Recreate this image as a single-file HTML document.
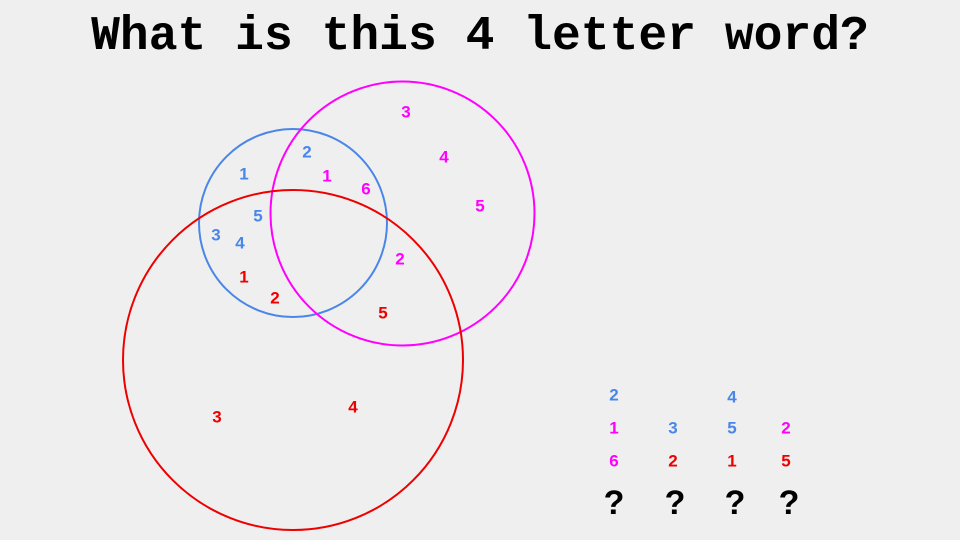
<!DOCTYPE html>
<html><head><meta charset="utf-8"><style>
html,body{margin:0;padding:0;background:#efefef;}
svg{display:block}
</style></head><body>
<svg width="960" height="540" viewBox="0 0 960 540" xmlns="http://www.w3.org/2000/svg">
<rect width="960" height="540" fill="#efefef"/>
<text x="480" y="49" text-anchor="middle" font-family="Liberation Mono, monospace" font-weight="bold" font-size="48" fill="#000">What is this 4 letter word?</text>
<circle cx="293" cy="223" r="94" fill="none" stroke="#4a86e8" stroke-width="2"/>
<circle cx="402.5" cy="213.5" r="132" fill="none" stroke="#ff00ff" stroke-width="2"/>
<circle cx="293" cy="360" r="170" fill="none" stroke="#ee0000" stroke-width="2"/>
<g font-family="Liberation Sans, sans-serif" font-weight="bold" font-size="17" text-anchor="middle" dominant-baseline="central">
<g fill="#4a86e8">
<text x="244" y="174">1</text><text x="307" y="152">2</text><text x="258" y="216">5</text><text x="216" y="235">3</text><text x="240" y="243">4</text>
<text x="614" y="395">2</text><text x="732" y="397">4</text><text x="673" y="428">3</text><text x="732" y="428">5</text>
</g>
<g fill="#ff00ff">
<text x="406" y="112">3</text><text x="444" y="157">4</text><text x="480" y="206">5</text><text x="327" y="176">1</text><text x="366" y="189">6</text><text x="400" y="259">2</text>
<text x="614" y="428">1</text><text x="786" y="428">2</text><text x="614" y="461">6</text>
</g>
<g fill="#ee0000">
<text x="244" y="277">1</text><text x="275" y="298">2</text><text x="383" y="313">5</text><text x="217" y="417">3</text><text x="353" y="407">4</text>
<text x="673" y="461">2</text><text x="732" y="461">1</text><text x="786" y="461">5</text>
</g>
</g>
<g font-family="Liberation Sans, sans-serif" font-weight="bold" font-size="34" text-anchor="middle" dominant-baseline="central" fill="#000">
<text x="614" y="503">?</text><text x="675" y="503">?</text><text x="735" y="503">?</text><text x="789" y="503">?</text>
</g>
</svg>
</body></html>
